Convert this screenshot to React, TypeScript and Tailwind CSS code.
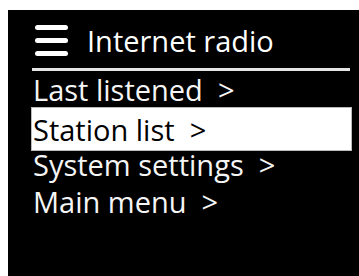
export default function App() {
  const font = { fontFamily: '"Open Sans", "Noto Sans", sans-serif' };
  return (
    <div className="w-[359px] h-[276px] bg-white overflow-hidden" style={font}>
      <div className="ml-[8px] mt-[10px] w-[351px] h-[266px] bg-black flex flex-col pl-[24px] pr-[9px]">
        <div className="flex items-center h-[58px] pt-[2px]">
          <div className="flex flex-col gap-[8px] ml-[3px] w-[33px]">
            <div className="h-[5px] rounded-full bg-white" />
            <div className="h-[5px] rounded-full bg-white" />
            <div className="h-[5px] rounded-full bg-white" />
          </div>
          <span className="ml-[19px] text-[29px] leading-none text-white">Internet radio</span>
        </div>
        <div className="h-[3px] bg-[#e5e5e5]" />
        <div className="h-[36px] flex items-end text-[29px] leading-none text-[#f5f5f5] pl-[1px]">
          <span className="pb-[3px]">Last listened&nbsp;&nbsp;&gt;</span>
        </div>
        <div className="h-[44px] -ml-[1px] mr-[-2px] bg-white border border-[#bbb] flex items-end text-[29px] leading-none text-black pl-[1px]">
          <span className="pb-[6px]">Station list&nbsp;&nbsp;&gt;</span>
        </div>
        <div className="h-[37px] flex items-end text-[29px] leading-none text-[#f5f5f5] pl-[1px]">
          <span className="pb-[9px]">System settings&nbsp;&nbsp;&gt;</span>
        </div>
        <div className="h-[37px] flex items-end text-[29px] leading-none text-[#f5f5f5] pl-[1px]">
          <span className="pb-[9px]">Main menu&nbsp;&nbsp;&gt;</span>
        </div>
      </div>
    </div>
  );
}
